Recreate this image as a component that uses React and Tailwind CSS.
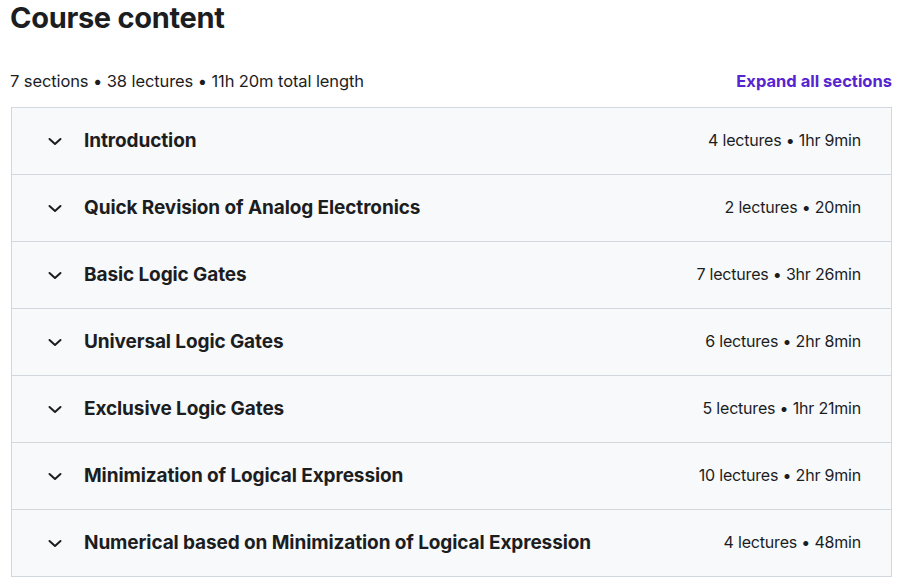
import React from "react";

const sections = [
  { title: "Introduction", meta: "4 lectures • 1hr 9min" },
  { title: "Quick Revision of Analog Electronics", meta: "2 lectures • 20min" },
  { title: "Basic Logic Gates", meta: "7 lectures • 3hr 26min" },
  { title: "Universal Logic Gates", meta: "6 lectures • 2hr 8min" },
  { title: "Exclusive Logic Gates", meta: "5 lectures • 1hr 21min" },
  { title: "Minimization of Logical Expression", meta: "10 lectures • 2hr 9min" },
  {
    title: "Numerical based on Minimization of Logical Expression",
    meta: "4 lectures • 48min",
  },
];

const Chevron = () => (
  <svg width="14" height="9" viewBox="0 0 14 9" fill="none" stroke="#1c1d1f" strokeWidth="2" strokeLinecap="round" strokeLinejoin="round">
    <path d="M1.5 2l5.5 5 5.5-5" />
  </svg>
);

const App = () => {
  return (
    <div className="w-[900px] h-[584px] bg-white text-[#1c1d1f] font-['Inter',sans-serif] overflow-hidden">
      <h2 className="pl-[10px] mt-0 text-[29px] leading-9 font-bold tracking-[-0.3px]">Course content</h2>
      <div className="flex items-center justify-between pl-[10px] pr-[8px] mt-[33px]">
        <span className="text-[16.5px] leading-6 tracking-[-0.1px]">7 sections • 38 lectures • 11h 20m total length</span>
        <button className="text-[16.5px] leading-6 font-bold text-[#5624d0]">Expand all sections</button>
      </div>
      <div className="ml-[11px] mr-[8px] mt-[14px] border border-[#d1d7dc]">
        {sections.map((s, i) => (
          <div
            key={s.title}
            className={
              "flex items-center bg-[#f7f9fa] pl-[36px] pr-[30px] " +
              (i > 0 ? "h-[67px] border-t border-[#d1d7dc]" : "h-[66px]")
            }
          >
            <Chevron />
            <span className="ml-[22px] text-[19px] leading-6 font-bold tracking-[-0.1px]">{s.title}</span>
            <span className="ml-auto text-[16px] leading-6 tracking-[-0.2px] -mt-[2px]">{s.meta}</span>
          </div>
        ))}
      </div>
    </div>
  );
};

export default App;
